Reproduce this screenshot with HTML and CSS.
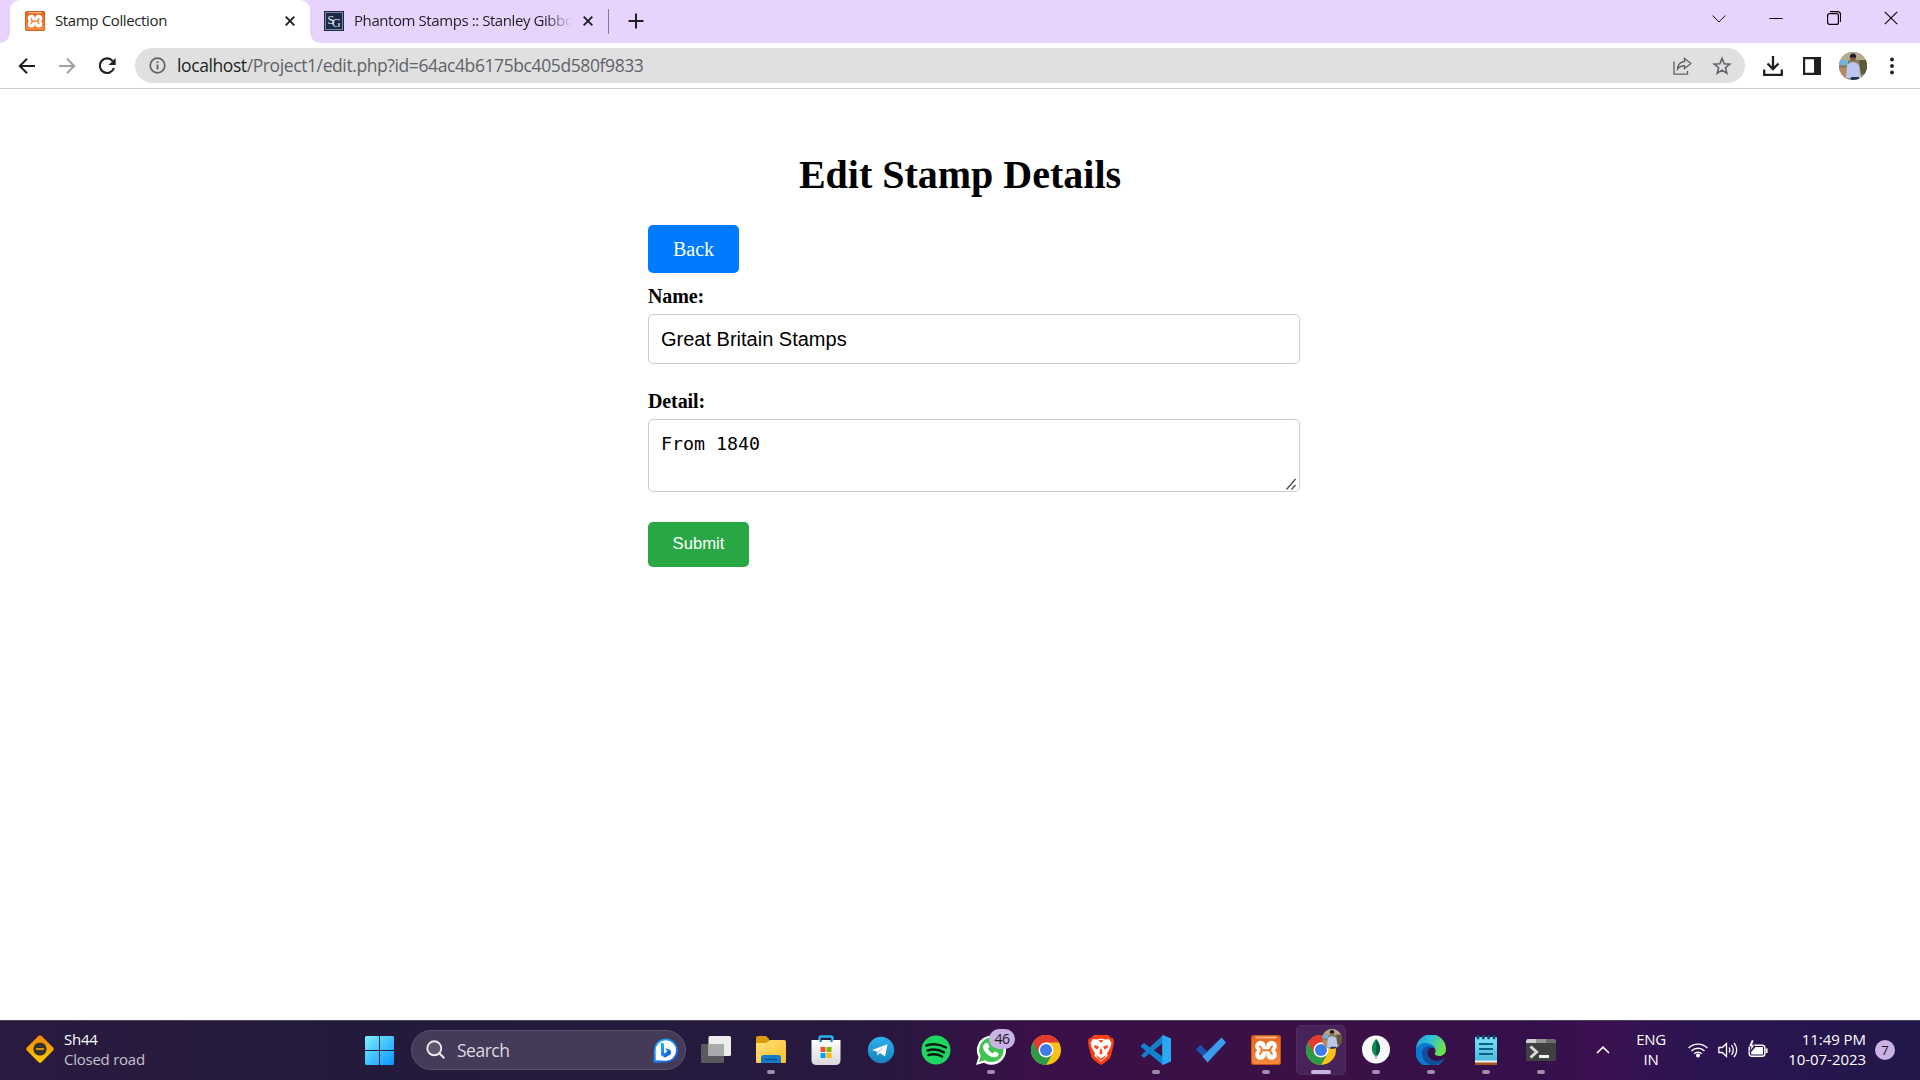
FILE: index.html
```html
<!DOCTYPE html>
<html lang="en">
<head>
<meta charset="utf-8">
<title>Stamp Collection</title>
<link rel="stylesheet" href="styles.css">
</head>
<body>
<svg class="defs" width="0" height="0">
  <defs>
    <linearGradient id="orange" x1="0" y1="0" x2="0" y2="1"><stop offset="0" stop-color="#e8641c"/><stop offset="1" stop-color="#f58a3c"/></linearGradient>
    <linearGradient id="win" x1="0" y1="0" x2="1" y2="1"><stop offset="0" stop-color="#7df1ff"/><stop offset="1" stop-color="#0a93ff"/></linearGradient>
    <linearGradient id="folder" x1="0" y1="0" x2="1" y2="1"><stop offset="0" stop-color="#ffe07a"/><stop offset="1" stop-color="#fbc02d"/></linearGradient>
    <linearGradient id="tele" x1="0" y1="0" x2="0" y2="1"><stop offset="0" stop-color="#2eb0ee"/><stop offset="1" stop-color="#1583bd"/></linearGradient>
    <linearGradient id="bag" x1="0" y1="0" x2="0" y2="1"><stop offset="0" stop-color="#fff"/><stop offset="1" stop-color="#d9d9d9"/></linearGradient>
    <linearGradient id="bing" x1="0" y1="0" x2="1" y2="1"><stop offset="0" stop-color="#18b5ff"/><stop offset="1" stop-color="#1650d8"/></linearGradient>
    <linearGradient id="edgeTop" x1="0" y1="0" x2="1" y2="0.4"><stop offset="0" stop-color="#1f9ce0"/><stop offset="0.5" stop-color="#2fc3d8"/><stop offset="1" stop-color="#6ee04c"/></linearGradient>
    <linearGradient id="note" x1="0" y1="0" x2="0" y2="1"><stop offset="0" stop-color="#7fe0f5"/><stop offset="1" stop-color="#3fb4d8"/></linearGradient>
    <linearGradient id="sign" x1="0" y1="0" x2="1" y2="1"><stop offset="0" stop-color="#f07f0a"/><stop offset="1" stop-color="#ffd000"/></linearGradient>
    <clipPath id="round"><circle cx="14" cy="14" r="14"/></clipPath>
    <symbol id="xampp" viewBox="0 0 30 30">
      <rect width="30" height="30" rx="2.5" fill="#c2571a"/><rect x="1" y="1" width="28" height="28" rx="2" fill="url(#orange)"/>
      <path d="M4 1.5h22l-1 2H5z" fill="#f9b988"/>
      <g fill="#fff"><circle cx="9.500" cy="11" r="5.300"/><circle cx="20.500" cy="11" r="5.300"/><circle cx="9.500" cy="19.500" r="5.300"/><circle cx="20.500" cy="19.500" r="5.300"/><path d="M6 12h18v6.500H6z"/></g>
      <path d="M9 11.500l1.500 2v3.500L9 19M21 11.500l-1.500 2v3.500l1.500 2M10.500 15.250h9" fill="none" stroke="#f07526" stroke-width="1.900" stroke-linecap="round"/>
    </symbol>
    <symbol id="chrome" viewBox="0 0 30 30">
      <circle cx="15" cy="15" r="15" fill="#fbc116"/>
      <path d="M2 7.500A15 15 0 0 0 15 30l6.500-11.300L15 15z" fill="#2d9a47"/>
      <path d="M2 7.500A15 15 0 0 1 28 7.500H15l-6.500 11.200z" fill="#e33b2e"/>
      <circle cx="15" cy="15" r="7.500" fill="#fff"/><circle cx="15" cy="15" r="6" fill="#3b7ded"/>
    </symbol>
    <symbol id="photo" viewBox="0 0 28 28">
      <g clip-path="url(#round)">
        <rect width="28" height="28" fill="#8c7e62"/>
        <path d="M0 0h28v8H0z" fill="#b5aa8a"/><path d="M0 8h9v5H0z" fill="#6fb4d8"/>
        <path d="M20 8h8v14h-6z" fill="#5c5a38"/><path d="M0 16h9v12H0z" fill="#b48a5e"/>
        <path d="M8 13q6-6 12 0l2 13H7z" fill="#bcc6ee"/><path d="M12 25h8v3h-8z" fill="#23345e"/>
        <circle cx="14" cy="6" r="3" fill="#8a5a48"/><path d="M10.800 5.500q0-4 3.200-4t3.200 4z" fill="#191c2c"/>
      </g>
    </symbol>
  </defs>
</svg>

<header class="tabstrip">
  <div class="tab tab-active">
    <svg class="favicon" width="20" height="20"><use href="#xampp"/></svg>
    <span class="tab-title tab-title-a">Stamp Collection</span>
    <svg class="tab-close" width="10" height="10" viewBox="0 0 10 10"><path d="M.7.700l8.600 8.600M9.300.700L.7 9.300" stroke="#1f1f23" stroke-width="1.900"/></svg>
  </div>
  <div class="tab tab-idle">
    <svg class="favicon" width="20" height="20" viewBox="0 0 20 20"><rect width="20" height="20" fill="#1b2a48"/><rect x="1.500" y="1.500" width="17" height="17" fill="none" stroke="#7d8aa0"/><text x="3.500" y="13" font-family="Liberation Serif, serif" font-size="12" fill="#e3e8f0">S</text><text x="8" y="15.500" font-family="Liberation Serif, serif" font-size="12" fill="#e3e8f0">G</text></svg>
    <span class="tab-title tab-title-b">Phantom Stamps :: Stanley Gibbo</span>
    <svg class="tab-close" width="10" height="10" viewBox="0 0 10 10"><path d="M.7.700l8.600 8.600M9.300.700L.7 9.300" stroke="#1f1f23" stroke-width="1.900"/></svg>
  </div>
  <svg class="new-tab" width="16" height="16" viewBox="0 0 16 16"><path d="M8 .5v15M.5 8h15" stroke="#1f1f23" stroke-width="2"/></svg>
  <div class="window-buttons">
    <svg width="14" height="14" viewBox="0 0 14 14"><path d="M.7 4.500l6.300 6.500L13.300 4.500" fill="none" stroke="#111" stroke-width="1"/></svg>
    <svg width="14" height="14" viewBox="0 0 14 14"><path d="M.5 7.500h13" stroke="#000"/></svg>
    <svg width="14" height="14" viewBox="0 0 14 14"><rect x=".6" y="2.600" width="10.800" height="10.800" rx="2" fill="none" stroke="#000" stroke-width="1.200"/><path d="M3 .600h7.500a3 3 0 0 1 3 3V11" fill="none" stroke="#000" stroke-width="1.100"/></svg>
    <svg width="14" height="14" viewBox="0 0 14 14"><path d="M.8.800l12.400 12.400M13.200.800L.8 13.200" stroke="#000" stroke-width="1.100"/></svg>
  </div>
</header>

<nav class="toolbar">
  <div class="nav-buttons">
    <svg width="18" height="18" viewBox="0 0 18 18"><path d="M9 1.800L1.800 9 9 16.200M2 9h15" fill="none" stroke="#1f1f23" stroke-width="2"/></svg>
    <svg width="18" height="18" viewBox="0 0 18 18"><path d="M9 1.800L16.200 9 9 16.200M16 9H1" fill="none" stroke="#a2a2a5" stroke-width="2"/></svg>
    <svg width="18" height="18" viewBox="0 0 18 18"><path d="M14.700 4A7.300 7.300 0 1 0 16 11" fill="none" stroke="#1f1f23" stroke-width="2.100"/><path d="M17.600 1v7h-7z" fill="#1f1f23"/></svg>
  </div>
  <div class="omnibox">
    <svg width="17" height="17" viewBox="0 0 17 17"><circle cx="8.500" cy="8.500" r="7.300" fill="none" stroke="#5f6368" stroke-width="1.700"/><path d="M8.500 7.500v5M8.500 4.300v1.800" stroke="#5f6368" stroke-width="1.800"/></svg>
    <span class="url"><b>localhost</b>/Project1/edit.php?id=64ac4b6175bc405d580f9833</span>
    <svg class="share" width="19" height="18" viewBox="0 0 19 18"><path d="M1 4.500v12.600h13.500v-3" fill="none" stroke="#5f6368" stroke-width="1.300"/><path d="M11.500 1.500l6.500 5-6.500 5V8.800c-3.500 0-5.500 1-7 3.200.3-4.200 3-7 7-7.500z" fill="none" stroke="#5f6368" stroke-width="1.400"/></svg>
    <svg width="20" height="20" viewBox="0 0 20 20"><path d="M10 2.400l2.100 5.300 5.700.4-4.400 3.600 1.400 5.600L10 14.200l-4.800 3.100 1.400-5.600L2.200 8.100l5.700-.4z" fill="none" stroke="#5f6368" stroke-width="1.600"/></svg>
  </div>
  <div class="actions">
    <svg class="download" width="20" height="20" viewBox="0 0 20 20"><path d="M10 0v12M4.500 7.500L10 13l5.500-5.500M1.200 13.500v5.300h17.600v-5.300" fill="none" stroke="#1f1f23" stroke-width="2.300"/></svg>
    <svg class="panel" width="18" height="18" viewBox="0 0 18 18"><path d="M0 0h18v18H0zM2.200 2.200v13.600h8.800V2.200z" fill="#1f1f23" fill-rule="evenodd"/></svg>
    <svg class="avatar" width="28" height="28"><use href="#photo"/></svg>
    <svg class="menu" width="4" height="18" viewBox="0 0 4 18"><g fill="#1f1f23"><circle cx="2" cy="2.500" r="1.900"/><circle cx="2" cy="9" r="1.900"/><circle cx="2" cy="15.500" r="1.900"/></g></svg>
  </div>
</nav>

<main class="page">
  <h1>Edit Stamp Details</h1>
  <form class="form">
    <a class="back">Back</a>
    <label>Name:</label>
    <div class="field field-name">Great Britain Stamps</div>
    <label>Detail:</label>
    <div class="field field-detail"><span>From 1840</span><svg width="12" height="12" viewBox="0 0 12 12"><path d="M1.500 11.500L10.500 1M6.500 11.500L10.500 7" stroke="#555" stroke-width="1.400"/></svg></div>
    <button type="button" class="submit">Submit</button>
  </form>
</main>

<footer class="taskbar">
  <div class="widget">
    <svg width="30" height="30" viewBox="0 0 30 30"><rect x="4.700" y="4.700" width="20.600" height="20.600" rx="2" transform="rotate(45 15 15)" fill="url(#sign)"/><circle cx="15" cy="15" r="6.600" fill="#33322c"/><path d="M11 15h8" stroke="#f5a623" stroke-width="1.600"/></svg>
    <div class="widget-text"><span>Sh44</span><span class="dim">Closed road</span></div>
  </div>
  <svg class="start" width="29" height="29" viewBox="0 0 29 29"><path d="M1 0h13v14H0V1zM15 0h13l1 1v13H15zM0 15h14v14H1l-1-1zM15 15h14v13l-1 1H15z" fill="url(#win)"/></svg>
  <div class="search">
    <svg width="20" height="20" viewBox="0 0 20 20"><circle cx="8.300" cy="8.300" r="7" fill="#8d8798" fill-opacity=".35" stroke="#eceaf0" stroke-width="1.900"/><path d="M13.300 13.300l5 5" stroke="#eceaf0" stroke-width="2.100"/></svg>
    <span>Search</span>
    <svg class="bing" width="25" height="25" viewBox="0 0 25 25"><path d="M.5 24.700L1 12.500A12 12 0 1 1 13 24.500z" fill="url(#bing)"/><path d="M2.700 22.300V12.500A10.200 10.200 0 1 1 13 22.700z" fill="#fff"/><path d="M8 4.500l3 1.200v9.700l3-1.600-1.500-3.800 4.500 1.800c1.800 2 1.300 4-.5 5.200L12 19.700l-4-2.700z" fill="url(#bing)"/></svg>
  </div>
  <div class="apps">
    <div class="app"><svg width="30" height="30" viewBox="0 0 30 30"><rect y="9" width="23" height="19" rx="1.500" fill="#5b5960"/><rect x="7.500" y="1" width="22.500" height="20" rx="1.500" fill="#ededed"/><path d="M7.500 9H23v12H7.500z" fill="#aaa9ac"/></svg></div>
    <div class="app run"><svg width="30" height="30" viewBox="0 0 30 30"><path d="M0 3q0-2 2-2h8l3 3v7H0z" fill="#dc9a0b"/><path d="M0 8h10l4-3h14q2 0 2 2v20q0 1-1 1H1q-1 0-1-1z" fill="url(#folder)"/><path d="M5 28v-5q0-3 3-3h14q3 0 3 3v5z" fill="#1679ca"/><path d="M9 24.500h12" stroke="#0b4f8e" stroke-width="1.500"/></svg></div>
    <div class="app"><svg width="30" height="30" viewBox="0 0 30 30"><path d="M8.500 8V3q0-1.500 1.500-1.500h10Q21.500 1.500 21.500 3v5" fill="none" stroke="#28b2ef" stroke-width="2.400"/><path d="M.5 5h29v20q0 5-5 5h-19q-5 0-5-5z" fill="url(#bag)"/><path d="M8.500 5h2.400v2H8.500zM19.300 5h2.400v2h-2.400z" fill="#1787d0"/><path fill="#f25022" d="M9.500 12h5v5h-5z"/><path fill="#7fba00" d="M15.500 12h5v5h-5z"/><path fill="#00a4ef" d="M9.500 18h5v5h-5z"/><path fill="#ffb900" d="M15.500 18h5v5h-5z"/></svg></div>
    <div class="app"><svg width="30" height="30" viewBox="0 0 30 30"><circle cx="15" cy="15" r="13.200" fill="url(#tele)"/><path d="M6 15l15.500-5.800-2.500 12.300-5-3.500-2.700 2.500-.5-4z" fill="#fff"/><path d="M11 16.800l8-5.600-6.300 6.600-1.300 2.700z" fill="#b9d6e8"/></svg></div>
    <div class="app"><svg width="30" height="30" viewBox="0 0 30 30"><circle cx="15" cy="15" r="14.500" fill="#1ed760"/><path d="M5.500 10.500q10-3.500 19.500 2M6.500 15.500q9-2.500 16.500 1.800M7.500 20q7.500-2 13.500 1.500" fill="none" stroke="#0b1a10" stroke-width="2.500" stroke-linecap="round"/></svg></div>
    <div class="app run"><svg width="30" height="30" viewBox="0 0 30 30"><path d="M0 30l2.500-8A14.600 14.600 0 1 1 8 27.800z" fill="#fff"/><path d="M3 27l1.800-6A12.200 12.200 0 1 1 9 25.300z" fill="#3fc351"/><path d="M9.500 8h2.300l1.700 3.800-1.500 2c1.200 2.300 2.500 3.500 5 4.500l1.800-2 3.800 1.900q.3 3-3 4c-6 1-13-6-12.500-11q.4-2 2.400-3.200z" fill="#fff"/></svg><span class="count">46</span></div>
    <div class="app"><svg width="30" height="30"><use href="#chrome"/></svg></div>
    <div class="app"><svg width="30" height="30" viewBox="0 0 30 30"><path d="M8 0h14l3 3h2l1 4-.5 3.500L24.500 22Q23 25 15 30 7 25 5.500 22L2.500 10.500 2 7l1-4h2z" fill="#fb3f11"/><path d="M15 3.500l4 1 4-.5 2.500 4-1 4-2 4-1.500 2 .5 3-6.500 5.500L8.500 21l.5-3-1.500-2-2-4-1-4L7 4l4 .5z" fill="#fff"/><path d="M8 10l5 1.500-1.500 3-3-1.500zM22 10l-5 1.500 1.500 3 3-1.500zM14.200 14h1.600l.7 4.500-1.500 1.200-1.500-1.200zM10 20l5 3.500 5-3.500-1.500 3L15 25.500 11.500 23zM12.500 5l2.500 3 2.500-3z" fill="#fb4a20"/></svg></div>
    <div class="app run"><svg width="30" height="30" viewBox="0 0 30 30"><path d="M0 20.500L22 0v8L3 23z" fill="#1480c5"/><path d="M0 10.500l3-2.500 19 14v8L0 12z" fill="#0f83cf"/><path d="M22 0l8 3.500v23L22 30q-.8-.5-.8-2V2z" fill="#2aa9f2"/></svg></div>
    <div class="app"><svg width="30" height="30" viewBox="0 0 30 30"><path d="M0 14.500l4.500-4.800 8 8.300-5 4z" fill="#1b53b4"/><path d="M6.500 21.500L25.500 2.500l4.500 5-18.500 20z" fill="#3b9df0"/></svg></div>
    <div class="app run"><svg width="30" height="30"><use href="#xampp"/></svg></div>
    <div class="app run active"><svg width="30" height="30"><use href="#chrome"/></svg><svg class="mini" width="20" height="20"><use href="#photo"/></svg></div>
    <div class="app run"><svg width="30" height="30" viewBox="0 0 30 30"><circle cx="15" cy="14.500" r="14" fill="#f8f8f8"/><path d="M15 4c5.500 6 5.500 13 0 18-5.500-5-5.500-12 0-18z" fill="#0b8a53"/><path d="M15 4c5.500 6 5.500 13 0 18z" fill="#075f43"/><path d="M15 20v4" stroke="#8aa99a" stroke-width="1.200"/></svg></div>
    <div class="app run"><svg width="30" height="30" viewBox="0 0 30 30"><path d="M0 14A15 15 0 0 1 30 14.500C30 20 25 22 20.500 20.500 17 19.500 20 18 19.500 15 18.500 11 12 7 0 14z" fill="url(#edgeTop)"/><path d="M0 14C4 5 17 7 19.500 14 15 10 9 15 12 21c3 6 11 7 16.500 2A15 15 0 0 1 0 14z" fill="#0c78cf"/><path d="M6 18c0-6 7-9 13-4.500C14 11 9 15 12 21c3 6 11 7 16.500 2-3 6-9 8-14 7C9 28 6 23 6 18z" fill="#104f9c"/></svg></div>
    <div class="app run"><svg width="30" height="30" viewBox="0 0 30 30"><rect x="4" y="2" width="22" height="28" rx="1" fill="url(#note)"/><path d="M4 27h22v2q0 1-1 1H5q-1 0-1-1z" fill="#a8541a"/><path d="M4 25.500h22v2H4z" fill="#f1f1f1"/><path d="M8 9h14M8 14h14M8 19h14" stroke="#0a6186" stroke-width="2"/><path d="M7 1.500V3M12.300 1.500V3M17.600 1.500V3M23 1.500V3" stroke="#0c4f74" stroke-width="2.800" stroke-linecap="round"/></svg></div>
    <div class="app run"><svg width="30" height="30" viewBox="0 0 30 30"><rect y="4" width="30" height="22" rx="1.500" fill="#414141"/><path d="M1.500 4H10v4H0V5.500z" fill="#d0d0d0"/><path d="M10 4h10v4H10z" fill="#969696"/><path d="M20 4h8.500L30 5.500V8H20z" fill="#6d6d6d"/><path d="M4.500 11.500l6 5.500-6 5.500" fill="none" stroke="#d8d8d8" stroke-width="3"/><path d="M13 21.500h10" stroke="#f2f2f2" stroke-width="3"/></svg></div>
  </div>
  <div class="tray">
    <svg class="up" width="14" height="8" viewBox="0 0 14 8"><path d="M1 7l6-5.800L13 7" fill="none" stroke="#fff" stroke-width="1.700"/></svg>
    <div class="lang"><span>ENG</span><span>IN</span></div>
    <svg class="wifi" width="20" height="16" viewBox="0 0 20 16"><g fill="none" stroke="#fff" stroke-width="1.400"><path d="M.7 6a13 13 0 0 1 18.600 0M3.500 9a9.200 9.200 0 0 1 13 0M6.200 11.800a5.400 5.400 0 0 1 7.600 0"/></g><circle cx="10" cy="13.500" r="2" fill="#fff"/></svg>
    <svg class="sound" width="20" height="16" viewBox="0 0 20 16"><g fill="none" stroke="#fff" stroke-width="1.300"><path d="M.8 5.500h3.500l4.200-4v13l-4.200-4H.8zM11 5.500q1.800 2.500 0 5M13.500 3.200q3.600 4.800 0 9.600M16 .9q5.400 7.100 0 14.200"/></g></svg>
    <svg class="battery" width="20" height="18" viewBox="0 0 20 18"><rect x="1.200" y="5.200" width="15.600" height="11" rx="2.500" fill="none" stroke="#fff" stroke-width="1.400"/><path d="M7.500 7H15v7.500H3.200V12z" fill="#fff"/><path d="M18.600 8.500v4.500" stroke="#fff" stroke-width="2"/><path d="M3.500 0L.8 6.500h2.300L2 11.500 6.800 5H4.300L6 0z" fill="#fff" stroke="#23164a" stroke-width=".6"/></svg>
    <div class="clock"><span>11:49 PM</span><span>10-07-2023</span></div>
    <span class="notif">7</span>
  </div>
</footer>
</body>
</html>
```
FILE: styles.css
```css
* { box-sizing: border-box; }
body {
  margin: 0;
  width: 1920px;
  height: 1080px;
  overflow: hidden;
  display: flex;
  flex-direction: column;
  background: #fff;
  font-family: "Open Sans", "Noto Sans", sans-serif;
}
svg { display: block; flex: none; }
.defs { position: absolute; }

/* tab strip */
.tabstrip {
  display: flex;
  height: 43px;
  padding-left: 10px;
  background: #e8d3ff;
  flex: none;
}
.tab { display: flex; align-items: center; height: 42px; flex: none; }
.tab-active {
  position: relative;
  width: 300px;
  padding: 0 15px;
  height: 43px;
  padding-bottom: 1px;
  background: #fff;
  border-radius: 10px 10px 0 0;
}
.tab-active::before, .tab-active::after {
  content: "";
  position: absolute;
  bottom: 0;
  width: 10px;
  height: 10px;
}
.tab-active::before { left: -10px; background: radial-gradient(circle at 0 0, #e8d3ff 9.5px, #fff 10px); }
.tab-active::after { right: -10px; background: radial-gradient(circle at 100% 0, #e8d3ff 9.5px, #fff 10px); }
.tab-idle { width: 299px; padding-left: 14px; }
.tab-idle::after {
  content: "";
  width: 1px;
  height: 25px;
  margin-left: 15px;
  background: #857c8d;
  flex: none;
}
.tab-title {
  margin-left: 10px;
  padding-bottom: 2px;
  white-space: nowrap;
  font-size: 15px;
  line-height: 22px;
  letter-spacing: -0.37px;
  color: #1f1f23;
}
.tab-title-b {
  width: 218px;
  letter-spacing: -0.42px;
  -webkit-mask-image: linear-gradient(90deg, #000 88%, transparent);
  mask-image: linear-gradient(90deg, #000 88%, transparent);
}
.tab-close { margin-left: auto; }
.new-tab { margin: 13px 0 0 19px; }
.window-buttons { display: flex; gap: 43.5px; margin: 11px 22px 0 auto; }

/* toolbar */
.toolbar {
  display: flex;
  align-items: center;
  height: 46px;
  padding: 0 26px 0 18px;
  border-bottom: 1px solid #cfcfcf;
  flex: none;
}
.nav-buttons { display: flex; gap: 22px; width: 117px; flex: none; }
.omnibox {
  display: flex;
  align-items: center;
  width: 1610px;
  height: 35px;
  padding: 0 13px 0 14px;
  border-radius: 18px;
  background: #e0e0e0;
  flex: none;
}
.url {
  margin-left: 11px;
  padding-bottom: 2px;
  font-size: 17.5px;
  line-height: 24px;
  letter-spacing: -0.4px;
  white-space: nowrap;
  color: #5f6368;
}
.url b { font-weight: 400; color: #1f1f23; }
.share { margin: 0 20px 0 auto; }
.actions { display: flex; align-items: center; }
.download { margin-left: 18px; }
.panel { margin-left: 20px; }
.avatar { margin-left: 18px; }
.menu { margin-left: 23px; }

/* page */
.page { flex: 1; font-family: "Liberation Serif", serif; color: #000; }
h1 {
  margin: 63px 0 0;
  font-size: 40px;
  line-height: 46px;
  text-align: center;
}
.form {
  display: flex;
  flex-direction: column;
  align-items: flex-start;
  width: 652px;
  margin: 27px 0 0 648px;
}
.back {
  width: 91px;
  height: 48px;
  border-radius: 5px;
  background: #007bff;
  color: #fff;
  font-size: 20px;
  line-height: 48px;
  text-align: center;
}
label { font-size: 20px; font-weight: 700; line-height: 23px; margin: 12px 0 6px; letter-spacing: -0.1px; }
.field {
  width: 652px;
  border: 1px solid #ccc;
  border-radius: 5px;
  padding: 0 12px;
}
.field-name {
  height: 50px;
  margin-bottom: 14px;
  font: 20px/48px "Liberation Sans", sans-serif;
}
.field-detail {
  display: flex;
  justify-content: space-between;
  align-items: flex-end;
  height: 73px;
  padding-right: 2px;
  padding-bottom: 1px;
  font: 18.3px/24px "DejaVu Sans Mono", monospace;
}
.field-detail span { align-self: flex-start; margin-top: 12px; }
.submit {
  width: 101px;
  height: 45px;
  margin-top: 30px;
  padding: 0 0 2px;
  border: 0;
  border-radius: 5px;
  background: #28a745;
  color: #fff;
  font: 16.67px "Liberation Sans", sans-serif;
}

/* taskbar */
.taskbar {
  display: flex;
  align-items: center;
  height: 60px;
  padding-bottom: 1px;
  flex: none;
  border-top: 1px solid #4b4458;
  background: linear-gradient(90deg, #2a1a40 0, #231b3b 20%, #251b3e 35%, #29173f 46%, #3a1048 54%, #3b1045 68%, #34104b 80%, #3b1050 83%, #2c1451 88%, #22174a 100%);
  color: #fff;
  font-size: 15px;
  line-height: 20px;
}
.widget { display: flex; align-items: center; width: 365px; padding-left: 25px; gap: 9px; }
.widget svg { margin-top: -2px; }
.widget-text { display: flex; flex-direction: column; letter-spacing: -0.25px; margin-top: -2px; }
.dim { color: #c6c2cc; }
.search {
  display: flex;
  align-items: center;
  width: 275px;
  height: 40px;
  margin-left: 17px;
  padding: 0 7px 0 14px;
  border: 1px solid #5d5269;
  border-radius: 20px;
  background: #453a57;
  color: #dcd8e0;
  font-size: 17.5px;
  letter-spacing: -0.5px;
}
.search span { margin: 0 auto 0 11px; }
.apps { display: flex; gap: 5px; margin-left: 5px; }
.app {
  position: relative;
  display: flex;
  align-items: center;
  justify-content: center;
  width: 50px;
  height: 50px;
  border-radius: 5px;
}
.run::after {
  content: "";
  position: absolute;
  left: 21px;
  bottom: 1px;
  width: 8px;
  height: 4px;
  border-radius: 2px;
  background: #9e8ca8;
}
.active { background: #48235a; border: 1px solid #512c60; }
.active::after { left: 14px; bottom: 0; width: 20px; background: #c9b2e4; }
.mini { position: absolute; top: 3px; right: 3px; }
.count {
  position: absolute;
  left: 23px;
  top: 4px;
  width: 26px;
  height: 20px;
  border-radius: 10px;
  background: #c9b2e4;
  color: #1b1424;
  font-size: 14px;
  text-align: center;
  letter-spacing: -0.5px;
}
.tray { display: flex; align-items: center; margin-left: 30px; }
.lang, .clock { display: flex; flex-direction: column; white-space: nowrap; letter-spacing: -0.3px; margin-top: -2px; }
.lang { width: 40px; align-items: center; margin-left: 21px; }
.wifi { margin-left: 17px; }
.sound { margin-left: 10px; }
.battery { margin: -3px 0 0 10px; }
.clock { width: 90px; margin-left: 8px; align-items: flex-end; letter-spacing: -0.05px; }
.notif {
  width: 20px;
  height: 20px;
  margin-left: 9px;
  border-radius: 50%;
  background: #c9b2e4;
  color: #1b1424;
  font-size: 13px;
  text-align: center;
}
```
